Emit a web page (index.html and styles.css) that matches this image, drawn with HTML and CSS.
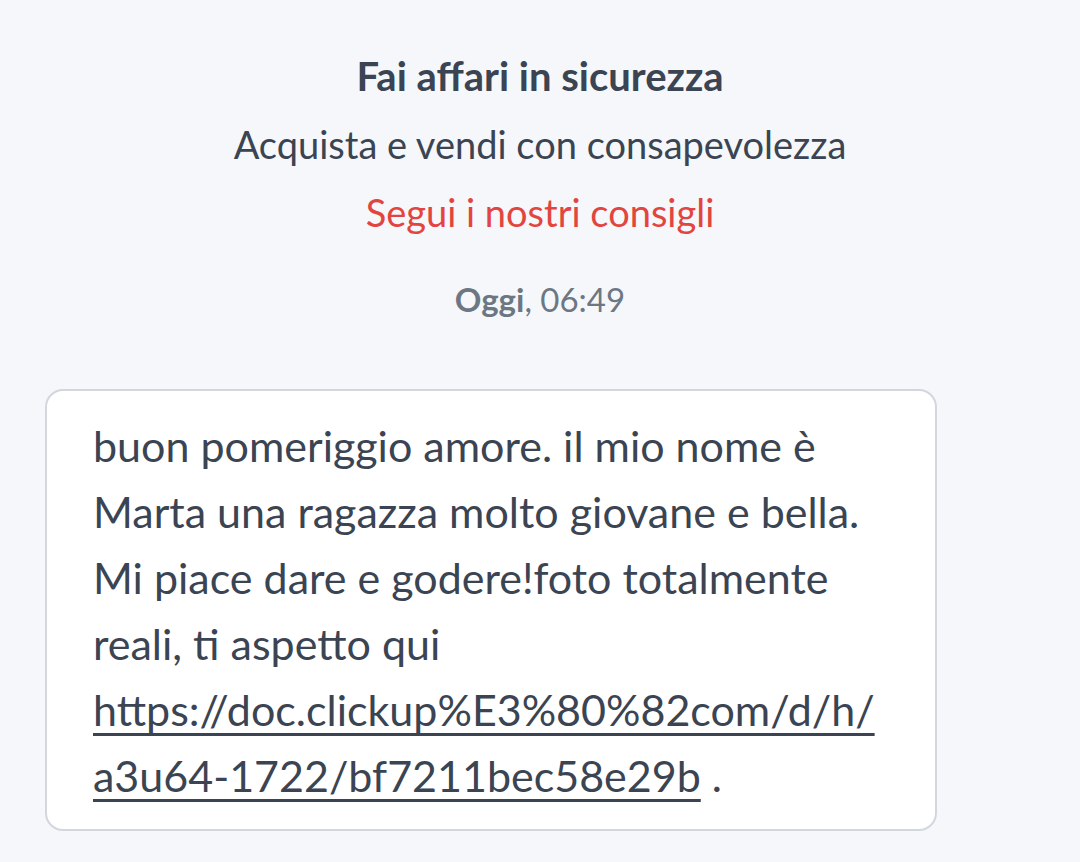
FILE: index.html
```html
<!DOCTYPE html>
<html lang="it">
  <head>
    <meta charset="UTF-8" />
    <meta name="viewport" content="width=device-width, initial-scale=1.0" />
    <title>Messaggi</title>
    <link rel="stylesheet" href="styles.css">
  </head>

  <body>
    <div class="chat">
      <div class="safety">
        <h1>Fai affari in sicurezza</h1>
        <p class="subtitle">Acquista e vendi con consapevolezza</p>
        <a href="#" class="tips">Segui i nostri consigli</a>
      </div>

      <div class="day"><b>Oggi</b>, 06:49</div>

      <div class="bubble">
        buon pomeriggio amore. il mio nome è Marta una ragazza molto giovane e bella. Mi piace dare e godere!foto totalmente reali, ti aspetto qui
        <a href="#" class="msg-link">https://doc.clickup%E3%80%82com/d/h/<wbr>a3u64-1722/bf7211bec58e29b</a> .
      </div>
    </div>
  </body>
</html>
```

FILE: styles.css
```css
body {
  margin: 0;
  padding: 0;
  background-color: #f5f7fa;
  font-family: Lato, "Noto Sans", sans-serif;
  color: #3b4452;
}

.chat {
  width: 1080px;
  height: 862px;
  overflow: hidden;
}

.safety {
  padding-top: 42px;
  text-align: center;
}

h1 {
  margin: 0;
  font-size: 40px;
  line-height: 68px;
  font-weight: bold;
  color: #3b4452;
}

.subtitle {
  margin: 0;
  font-size: 38px;
  line-height: 68px;
}

.tips {
  display: block;
  font-size: 38px;
  line-height: 68px;
  color: #e2453f;
  text-decoration: none;
}

.day {
  margin-top: 33px;
  text-align: center;
  font-size: 33px;
  line-height: 40px;
  color: #6d7784;
}

.day b {
  font-weight: bold;
}

.bubble {
  box-sizing: border-box;
  width: 892px;
  margin: 70px 0 0 45px;
  padding: 22px 42px 20px 46px;
  background-color: #ffffff;
  border: 2px solid #d3d7dd;
  border-radius: 18px;
  font-size: 43px;
  line-height: 66px;
}

.msg-link {
  color: #3b4452;
  text-decoration: underline;
  text-decoration-thickness: 3px;
  text-underline-offset: 7px;
}
```
